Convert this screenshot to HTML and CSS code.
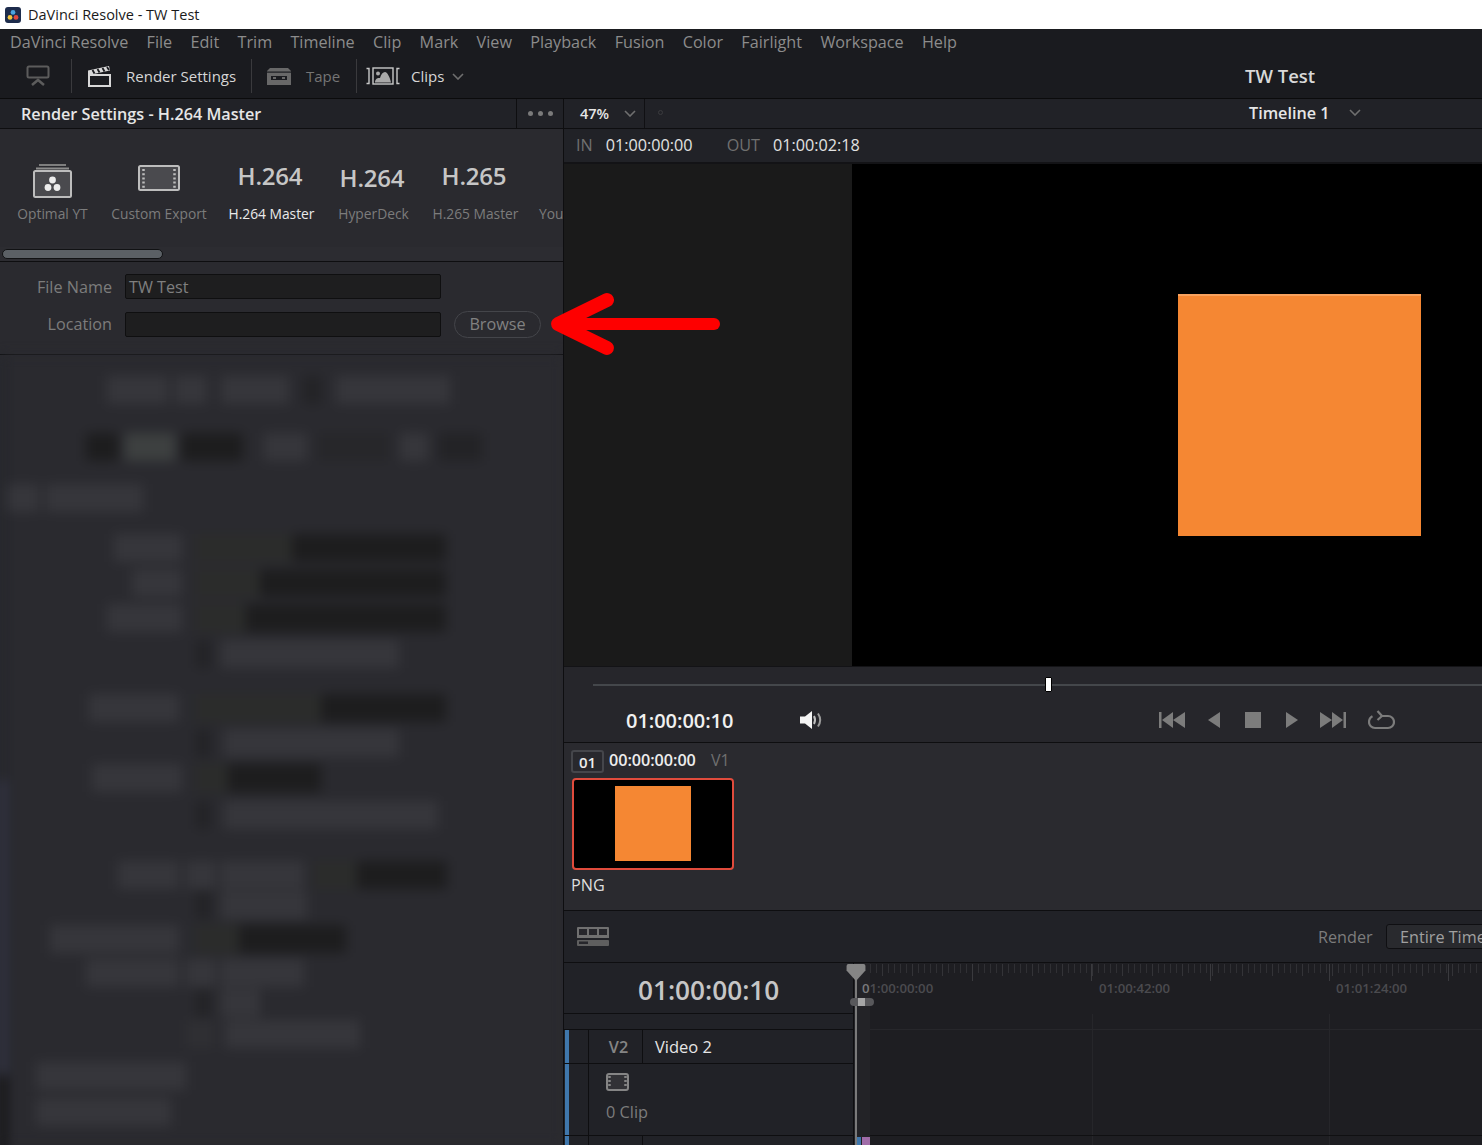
FILE: index.html
```html
<!DOCTYPE html>
<html lang="en">
<head>
<meta charset="utf-8">
<title>DaVinci Resolve - TW Test</title>
<link rel="stylesheet" href="styles.css">
</head>
<body>
<div class="app">
  <header class="titlebar">
    <svg class="app-icon" viewBox="0 0 16 16"><rect width="16" height="16" rx="3" fill="#1d2c4c"/><circle cx="8" cy="5.4" r="2.4" fill="#4aa3e0"/><circle cx="5" cy="10.4" r="2.4" fill="#f2c53d"/><circle cx="11" cy="10.4" r="2.4" fill="#e2483d"/></svg>
    <span>DaVinci Resolve - TW Test</span>
  </header>
  <nav class="menubar">
    <span>DaVinci Resolve</span><span>File</span><span>Edit</span><span>Trim</span><span>Timeline</span><span>Clip</span><span>Mark</span><span>View</span><span>Playback</span><span>Fusion</span><span>Color</span><span>Fairlight</span><span>Workspace</span><span>Help</span>
  </nav>
  <div class="toolbar">
    <svg class="tb-monitor" viewBox="0 0 24 22" fill="none" stroke="#5c5c5c" stroke-width="2"><rect x="1.500" y="1.500" width="21" height="11" rx="1.500"/><path d="M6 20l6-5 6 5" stroke-width="2.500"/></svg>
    <i class="tb-sep sep-a"></i>
    <svg class="tb-clapper" viewBox="0 0 23 21"><path d="M1 9h21v11H1z" fill="#1b1c20" stroke="#d8d8d8" stroke-width="2"/><path d="M0 9V4.500L21 0l1 4.500L3 8.500z" fill="#d8d8d8"/><path d="M4.500 4l2 3.500M9.500 3l2 3.500M14.500 2l2 3.500M19 1l2 3" stroke="#1b1c20" stroke-width="1.800"/></svg>
    <span class="tb-label tb-render">Render Settings</span>
    <i class="tb-sep sep-b"></i>
    <svg class="tb-tape" viewBox="0 0 24 17"><path d="M3 0h18l3 3v14H0V3z" fill="#686868"/><rect x="0" y="3.500" width="24" height="1.200" fill="#1b1c20"/><rect x="4" y="8" width="16" height="4" fill="#1b1c20"/><rect x="6" y="9" width="3" height="2" fill="#686868"/><rect x="15" y="9" width="3" height="2" fill="#686868"/></svg>
    <span class="tb-label tb-dim">Tape</span>
    <i class="tb-sep sep-c"></i>
    <svg class="tb-clips" viewBox="0 0 34 18" fill="none"><path d="M.5 1.500h2.500v15H.5M33.500 1.500H31v15h2.500" stroke="#c8c8c8" stroke-width="1.400"/><rect x="7" y="1" width="20" height="16" stroke="#c8c8c8" stroke-width="1.400"/><circle cx="12" cy="6.500" r="2" fill="#a8a8a8"/><path d="M9 15.500c0-4 3-5 5-4.500 1-4 3-6 5-6s5 5 6 10.500z" fill="#a8a8a8"/></svg>
    <span class="tb-label tb-clipstxt">Clips</span>
    <svg class="chev tb-chev" viewBox="0 0 12 7"><path d="M1 1l5 5 5-5"/></svg>
    <strong class="project">TW Test</strong>
  </div>

  <main class="workspace">
    <section class="left">
      <div class="panel-head">
        <h1>Render Settings - H.264 Master</h1>
        <div class="dots"><i></i><i></i><i></i></div>
      </div>
      <div class="presets">
        <div class="preset-row">
          <div class="preset p1">
            <div class="glyph"><svg class="ico-opt" viewBox="0 0 40 34"><rect x="6" y="0" width="27" height="2" fill="#7e7e7e"/><rect x="3" y="3.500" width="33" height="2" fill="#8c8c8c"/><rect x="1" y="7" width="37" height="26" rx="1.500" fill="#4a4a4e" stroke="#bdbdbd" stroke-width="2"/><circle cx="19.500" cy="16" r="3.400" fill="#ececec"/><circle cx="15" cy="23.500" r="3.400" fill="#ececec"/><circle cx="24" cy="23.500" r="3.400" fill="#ececec"/></svg></div>
            <span>Optimal YT</span>
          </div>
          <div class="preset p2">
            <div class="glyph"><svg class="ico-film" viewBox="0 0 42 26"><rect x="1" y="1" width="40" height="24" rx="1.500" fill="#4a4a4e" stroke="#bdbdbd" stroke-width="2"/><path d="M5.500 4v19M36.500 4v19" stroke="#bdbdbd" stroke-width="2.500" stroke-dasharray="2 2.200"/></svg></div>
            <span>Custom Export</span>
          </div>
          <div class="preset p3 active">
            <div class="glyph big">H.264</div>
            <span>H.264 Master</span>
          </div>
          <div class="preset p4">
            <div class="glyph big low">H.264</div>
            <span>HyperDeck</span>
          </div>
          <div class="preset p5">
            <div class="glyph big">H.265</div>
            <span>H.265 Master</span>
          </div>
          <div class="preset p6">
            <div class="glyph"></div>
            <span>YouTube</span>
          </div>
        </div>
        <div class="scrolltrack"><div class="scrollthumb"></div></div>
      </div>
      <div class="file-form">
        <div class="form-row">
          <label>File Name</label>
          <div class="field">TW Test</div>
        </div>
        <div class="form-row">
          <label>Location</label>
          <div class="field"></div>
          <div class="browse">Browse</div>
        </div>
      </div>
      <div class="blurred">
        <i class="edge-tint"></i><i class="edge-black"></i>
        <div class="br r1"><b class="blob x107 w61"></b><b class="blob x7 w32"></b><b class="blob x14 w68"></b><b class="blob dark x15 w17"></b><b class="blob x15 w114"></b></div>
        <div class="br r2"><b class="blob vdark x86 w32"></b><b class="blob grey x7 w50"></b><b class="blob vdark x7 w61"></b><b class="blob x21 w43"></b><b class="blob dark faint x11 w71"></b><b class="blob x11 w28"></b><b class="blob dark x11 w43"></b></div>
        <div class="br r3"><b class="blob x7 w32"></b><b class="blob x7 w97"></b></div>

        <div class="br r4"><div class="lab"><b class="blob w68"></b></div><div class="val"><b class="blob soft w96"></b><b class="blob vdark w154"></b></div></div>
        <div class="br r5"><div class="lab"><b class="blob w50"></b></div><div class="val"><b class="blob soft w64"></b><b class="blob vdark w186"></b></div></div>
        <div class="br r6"><div class="lab"><b class="blob w75"></b></div><div class="val"><b class="blob soft w50"></b><b class="blob vdark w200"></b></div></div>
        <div class="br r7"><div class="lab"></div><div class="val"><b class="blob dark w14"></b><b class="blob x11 w178"></b></div></div>

        <div class="br r8"><div class="lab short"><b class="blob w90"></b></div><div class="val"><b class="blob soft w125"></b><b class="blob vdark w125"></b></div></div>
        <div class="br r9"><div class="lab"></div><div class="val"><b class="blob dark w14"></b><b class="blob x14 w175"></b></div></div>
        <div class="br r10"><div class="lab"><b class="blob w90"></b></div><div class="val"><b class="blob soft w32"></b><b class="blob vdark w93"></b></div></div>
        <div class="br r11"><div class="lab"></div><div class="val"><b class="blob dark w14"></b><b class="blob x14 w214"></b></div></div>

        <div class="br r12"><div class="lab short"><b class="blob w61"></b></div><div class="val wide"><b class="blob w30"></b><b class="blob x5 w83"></b><b class="blob soft x10 w43"></b><b class="blob vdark w90"></b></div></div>
        <div class="br r13"><div class="lab"></div><div class="val"><b class="blob dark w14"></b><b class="blob x11 w86"></b></div></div>
        <div class="br r14"><div class="lab short"><b class="blob w129"></b></div><div class="val"><b class="blob soft w43"></b><b class="blob vdark w107"></b></div></div>
        <div class="br r15"><div class="lab short"><b class="blob w93"></b></div><div class="val wide"><b class="blob w30"></b><b class="blob x5 w83"></b></div></div>
        <div class="br r16"><div class="lab"></div><div class="val"><b class="blob dark w14"></b><b class="blob x11 w39"></b></div></div>
        <div class="br r17"><div class="lab"></div><div class="val wide"><b class="blob edge w28"></b><b class="blob x11 w135"></b></div></div>

        <div class="br r18"><b class="blob x36 w150"></b></div>
        <div class="br r19"><b class="blob x36 w135"></b></div>
      </div>
    </section>

    <section class="right">
      <div class="viewer-head">
        <div class="zoom"><span>47%</span><svg class="chev" viewBox="0 0 12 7"><path d="M1 1l5 5 5-5"/></svg></div>
        <i class="tiny-dot"></i>
        <div class="tl-name"><span>Timeline 1</span><svg class="chev" viewBox="0 0 12 7"><path d="M1 1l5 5 5-5"/></svg></div>
      </div>
      <div class="inout">
        <span class="io-key">IN</span><span class="io-val">01:00:00:00</span>
        <span class="io-key io-out">OUT</span><span class="io-val">01:00:02:18</span>
      </div>
      <div class="viewer">
        <div class="viewer-side"></div>
        <div class="viewer-frame"><div class="orange-square"></div></div>
      </div>
      <div class="transport">
        <div class="scrub"><i class="scrub-handle"></i></div>
        <div class="transport-row">
          <span class="tc">01:00:00:10</span>
          <svg class="speaker" viewBox="0 0 22 18"><path d="M0 5.500h5L12 0v18l-7-5.500H0z" fill="#f4f4f4"/><path d="M14 5c1.300 2.500 1.300 5.500 0 8" fill="none" stroke="#bdbdbd" stroke-width="2"/><path d="M18 2.500c2.700 4 2.700 9 0 13" fill="none" stroke="#9a9a9a" stroke-width="2"/></svg>
          <div class="controls">
            <svg class="c-skip" viewBox="0 0 26 16"><path d="M0 0h2.500v16H0zM3 8l11-8v16zM14 8l12-8v16z"/></svg>
            <svg class="c-step" viewBox="0 0 12 16"><path d="M12 0v16L0 8z"/></svg>
            <svg class="c-stop" viewBox="0 0 16 16"><rect width="16" height="16"/></svg>
            <svg class="c-step" viewBox="0 0 12 16"><path d="M0 0v16l12-8z"/></svg>
            <svg class="c-skip" viewBox="0 0 26 16"><path d="M26 0h-2.500v16H26zM23 8L12 0v16zM12 8L0 0v16z"/></svg>
            <svg class="c-loop" viewBox="0 0 27 20" fill="none" stroke="#7c7c7c" stroke-width="2.200"><path d="M13 6h7a6 6 0 0 1 0 12H7a6 6 0 0 1-6-6c0-2.500 1.200-4.500 3.500-5.700"/><path d="M9.500 1l4.500 5-4.500 4"/></svg>
          </div>
        </div>
      </div>
      <div class="clips">
        <div class="clip-info"><span class="clip-num">01</span><span class="clip-tc">00:00:00:00</span><span class="clip-track">V1</span></div>
        <div class="thumb"><div class="thumb-img"></div></div>
        <div class="clip-codec">PNG</div>
      </div>
      <div class="render-bar">
        <svg class="rb-icon" viewBox="0 0 32 19"><path d="M1 0h30a1 1 0 0 1 1 1v10H0V1a1 1 0 0 1 1-1z" fill="#707070"/><path d="M2 2h8v6H2zM12 2h8v6h-8zM22 2h8v6h-8z" fill="#26262b"/><rect y="13" width="32" height="6" rx="1" fill="#5f5f5f"/><rect x="2" y="14.500" width="9" height="2.500" fill="#26262b"/></svg>
        <span class="rb-label">Render</span>
        <div class="rb-select">Entire Timeline</div>
      </div>
      <div class="timeline">
        <div class="track-heads">
          <div class="big-tc">01:00:00:10</div>
          <div class="th-blank"></div>
          <div class="th-row">
            <i class="strip"></i><i class="cell-a"></i><span class="t-id">V2</span><span class="t-name">Video 2</span>
          </div>
          <div class="th-body">
            <i class="strip"></i><i class="cell-a"></i>
            <div class="t-info">
              <svg class="t-film" viewBox="0 0 23 18"><rect x="1" y="1" width="21" height="16" rx="2" fill="#323236" stroke="#858585" stroke-width="2"/><path d="M3.500 3v12M19.500 3v12" stroke="#858585" stroke-width="2.500" stroke-dasharray="2 2"/></svg>
              <span>0 Clip</span>
            </div>
          </div>
          <div class="th-row">
            <i class="strip"></i><i class="cell-a"></i><span class="t-id"></span><span class="t-name"></span>
          </div>
        </div>
        <div class="track-area">
          <div class="ruler">
            <div class="ticks"></div>
            <div class="labels"><span><em>0</em>1:00:00:00</span><span>01:00:42:00</span><span>01:01:24:00</span></div>
          </div>
          <div class="lanes">
            <div class="lane-grid">
              <div class="lane lane-top"></div>
              <div class="lane lane-v2"></div>
            </div>
          </div>
          <i class="gutter"></i>
          <i class="mini-blue"></i><i class="mini-purple"></i>
          <i class="ph-line"></i>
          <svg class="ph-head" viewBox="0 0 20 18"><path d="M2 0h16a2 2 0 0 1 2 2v5l-10 11L0 7V2a2 2 0 0 1 2-2z" fill="#858585"/></svg>
          <div class="ph-handle"><i></i></div>
        </div>
      </div>
    </section>
  </main>
  <svg class="red-arrow" viewBox="0 0 180 70" fill="none" stroke="#fe0000" stroke-linecap="round" stroke-linejoin="round"><path d="M10 35H166" stroke-width="12"/><path d="M59 11L10 35l49 24" stroke-width="14"/></svg>
</div>
</body>
</html>
```
FILE: styles.css
```css
* { box-sizing: border-box; }
html, body { margin: 0; padding: 0; }
body { width: 1482px; height: 1145px; overflow: hidden; font-family: "Open Sans", "Liberation Sans", sans-serif; background: #1a1b1e; }
i, b { display: block; font-style: normal; font-weight: normal; }
em { font-style: normal; color: #77777a; }
.app { position: relative; width: 1482px; height: 1145px; overflow: hidden; display: flex; flex-direction: column; }

.titlebar { height: 29px; flex: none; background: #fff; display: flex; align-items: center; padding-left: 5px; color: #1a1a1a; font-size: 14.500px; }
.app-icon { width: 16px; height: 16px; margin-right: 7px; }

.menubar { height: 26px; flex: none; background: #1a1b1f; display: flex; align-items: center; padding-left: 10px; gap: 18.300px; color: #8c8c8c; font-size: 16.200px; }

.toolbar { height: 44px; flex: none; background: #1a1b1f; border-bottom: 1px solid #0b0b0c; display: flex; align-items: center; position: relative; padding-bottom: 1px; }
.tb-monitor { width: 24px; height: 22px; margin-left: 26px; flex: none; }
.tb-sep { width: 1px; height: 34px; background: #3a3a3d; flex: none; }
.sep-a { margin-left: 21px; }
.tb-clapper { width: 23px; height: 21px; margin-left: 16px; flex: none; }
.tb-label { font-size: 15px; color: #d6d6d6; }
.tb-render { margin-left: 15px; width: 111px; white-space: nowrap; }
.sep-b { margin-left: 14px; }
.tb-tape { width: 24px; height: 17px; margin-left: 15px; flex: none; }
.tb-dim { color: #757575; margin-left: 15px; width: 35px; }
.sep-c { margin-left: 15px; }
.tb-clips { width: 34px; height: 18px; margin-left: 9px; flex: none; }
.tb-clipstxt { margin-left: 11px; width: 34px; }
.chev { width: 12px; height: 7px; fill: none; stroke: #6f6f6f; stroke-width: 1.600; flex: none; }
.tb-chev { margin-left: 7px; }
.project { position: absolute; left: 1245px; top: 9px; font-size: 18.500px; font-weight: 600; color: #d9d9d9; line-height: 24px; }

.workspace { flex: 1; min-height: 0; display: grid; grid-template-columns: 563px 1fr; column-gap: 1px; background: #0e0e10; }

.left { background: #2a2a2f; display: flex; flex-direction: column; min-height: 0; overflow: hidden; }
.panel-head { height: 30px; flex: none; background: #212227; border-bottom: 1px solid #0e0e10; display: flex; align-items: center; justify-content: space-between; }
.panel-head h1 { margin: 0 0 0 21px; font-size: 16.200px; font-weight: 600; color: #e6e6e6; white-space: nowrap; }
.dots { width: 47px; height: 100%; border-left: 1px solid #0e0e10; display: flex; align-items: center; justify-content: center; gap: 5px; }
.dots i { width: 5px; height: 5px; border-radius: 50%; background: #7a7a7a; }

.presets { height: 133px; flex: none; border-bottom: 1px solid #0e0e10; display: flex; flex-direction: column; justify-content: space-between; overflow: hidden; }
.preset-row { display: flex; height: 118px; }
.preset { flex: none; display: flex; flex-direction: column; align-items: center; color: #7c7c7c; font-size: 13.800px; white-space: nowrap; padding-top: 32px; }
.p1 { width: 105px; }
.p2 { width: 108px; }
.p3 { width: 117px; }
.p4 { width: 87px; }
.p5 { width: 117px; }
.p6 { width: 50px; align-items: flex-start; padding-left: 5px; }
.preset.active { color: #eaeaea; }
.glyph { height: 40px; margin-bottom: 3px; display: flex; align-items: center; justify-content: center; }
.big { font-size: 24px; font-weight: 600; letter-spacing: -.2px; color: #c6c6c6; line-height: 32px; padding: 0 3px 10px 0; }
.low { padding-top: 4px; }
.ico-opt { width: 40px; height: 34px; }
.ico-film { width: 42px; height: 26px; margin-top: -6px; }
.scrolltrack { height: 14px; background: #2c2c31; padding: 2px 0 3px 2px; }
.scrollthumb { width: 161px; height: 10px; border-radius: 5px; background: #5b6065; border: 1px solid #111214; }

.file-form { height: 93px; flex: none; border-bottom: 1px solid #0e0e10; padding-top: 12px; display: flex; flex-direction: column; gap: 13px; }
.form-row { height: 25px; display: flex; align-items: center; }
.form-row label { width: 112px; text-align: right; color: #7c7c7c; font-size: 16.200px; flex: none; }
.form-row + .form-row label { padding-bottom: 2px; }
.field { width: 316px; height: 25px; margin-left: 13px; background: #1e1e1f; border: 1px solid #0f0f10; border-radius: 2px; color: #7f7f7f; font-size: 16.200px; line-height: 24px; padding-left: 3px; flex: none; }
.browse { width: 87px; height: 27px; margin-left: 13px; border: 1px solid #44454a; border-radius: 14px; color: #818181; font-size: 16.200px; line-height: 25px; text-align: center; flex: none; }

.blurred { flex: 1; position: relative; filter: blur(6px); padding-top: 21px; background: linear-gradient(90deg, #24262b 0, #2a2a2f 12px, #2a2a2f 100%); }
.edge-tint { position: absolute; left: 0; top: 425px; width: 6px; height: 295px; background: #34364a; }
.edge-black { position: absolute; left: 0; top: 720px; width: 6px; height: 90px; background: #0e0e0e; }
.br { height: 28px; display: flex; align-items: stretch; }
.r2 { margin-top: 29px; }
.r3 { margin-top: 23px; }
.r4 { margin-top: 22px; }
.r5, .r6, .r9, .r10 { margin-top: 7px; }
.r7 { margin-top: 8px; }
.r8 { margin-top: 26px; }
.r11 { margin-top: 9px; }
.r12 { margin-top: 32px; }
.r13 { margin-top: 2px; }
.r14, .r15 { margin-top: 6px; }
.r16 { margin-top: 2px; }
.r17 { margin-top: 3px; }
.r18 { margin-top: 14px; }
.r19 { margin-top: 8px; }
.lab { width: 182px; flex: none; display: flex; justify-content: flex-end; }
.lab.short { padding-right: 3px; }
.val { margin-left: 14px; width: 250px; flex: none; display: flex; }
.val.wide { margin-left: 4px; width: 260px; }

.blob { height: 100%; background: #36363b; flex: none; }
.dark { background: #232326; }
.vdark { background: #1d1d1e; }
.grey { background: #3d4040; }
.soft { background: #2b2c2b; }
.faint { opacity: .5; }
.edge { background: #2f2f33; }
.x5 { margin-left: 5px; } .x7 { margin-left: 7px; } .x10 { margin-left: 10px; } .x11 { margin-left: 11px; } .x14 { margin-left: 14px; } .x15 { margin-left: 15px; } .x21 { margin-left: 21px; } .x36 { margin-left: 36px; } .x86 { margin-left: 86px; } .x107 { margin-left: 107px; }
.w14 { width: 14px; } .w17 { width: 17px; } .w28 { width: 28px; } .w30 { width: 30px; } .w32 { width: 32px; } .w39 { width: 39px; } .w43 { width: 43px; } .w50 { width: 50px; } .w61 { width: 61px; } .w64 { width: 64px; } .w68 { width: 68px; } .w71 { width: 71px; } .w75 { width: 75px; } .w83 { width: 83px; } .w86 { width: 86px; } .w90 { width: 90px; } .w93 { width: 93px; } .w96 { width: 96px; } .w97 { width: 97px; } .w107 { width: 107px; } .w114 { width: 114px; } .w125 { width: 125px; } .w129 { width: 129px; } .w135 { width: 135px; } .w150 { width: 150px; } .w154 { width: 154px; } .w175 { width: 175px; } .w178 { width: 178px; } .w186 { width: 186px; } .w200 { width: 200px; } .w214 { width: 214px; }

.right { display: flex; flex-direction: column; min-width: 0; min-height: 0; overflow: hidden; }
.viewer-head { height: 30px; flex: none; background: #212227; border-bottom: 1px solid #0e0e10; display: flex; align-items: center; position: relative; }
.zoom { width: 81px; height: 100%; border-right: 1px solid #101013; display: flex; align-items: center; padding-left: 16px; gap: 15px; color: #e6e6e6; font-size: 14.500px; font-weight: 600; }
.tiny-dot { width: 5px; height: 5px; border: 1px solid #3b3b3e; border-radius: 50%; margin-left: 13px; margin-top: -2px; }
.tl-name { margin-left: 586px; display: flex; align-items: center; gap: 20px; color: #e6e6e6; font-size: 16.200px; font-weight: 600; white-space: nowrap; padding-bottom: 2px; }
.tl-name span { width: 80px; }
.inout { height: 33px; flex: none; background: #212227; display: flex; align-items: center; padding: 0 0 2px 12px; font-size: 16.200px; }
.io-key { color: #707070; }
.io-val { color: #e2e2e2; margin-left: 13px; width: 87px; white-space: nowrap; }
.io-out { margin-left: 34px; }
.viewer { height: 504px; flex: none; display: flex; border-top: 2px solid #131316; }
.viewer-side { width: 288px; background: #1a1a1a; flex: none; }
.viewer-frame { flex: 1; background: #000; padding: 130px 0 0 326px; }
.orange-square { width: 243px; height: 242px; background: #f58733; border-top: 2px solid #f9a25e; }
.transport { height: 77px; flex: none; background: #26262b; border-top: 1px solid #131316; border-bottom: 1px solid #0e0e10; }
.scrub { height: 2px; margin: 17px 0 0 29px; background: #44474b; position: relative; }
.scrub-handle { position: absolute; left: 452px; top: -7px; width: 7px; height: 15px; background: #fff; border: 1px solid #000; border-radius: 1px; }
.transport-row { display: flex; align-items: center; height: 38px; margin-top: 15px; padding-left: 62px; }
.tc { font-size: 20px; font-weight: 600; color: #f0f0f0; width: 108px; white-space: nowrap; letter-spacing: -.05px; flex: none; }
.speaker { width: 22px; height: 18px; margin-left: 66px; flex: none; filter: blur(.4px); }
.controls { display: flex; align-items: center; margin-left: 337px; fill: #7c7c7c; filter: blur(.4px); }
.controls svg { flex: none; display: block; }
.c-skip { width: 26px; height: 16px; }
.c-step { width: 12px; height: 16px; margin: 0 24px; }
.c-stop { width: 16px; height: 16px; margin: 0 1px; }
.c-skip:nth-child(5) { margin-left: -2px; }
.c-step:nth-child(2) { margin-left: 23px; }
.c-loop { width: 27px; height: 20px; margin-left: 22px; }
.clips { height: 168px; flex: none; background: #2a2a2f; border-bottom: 1px solid #0e0e10; padding: 7px 0 0 7px; }
.clip-info { display: flex; align-items: center; height: 22px; }
.clip-num { width: 33px; height: 23px; border: 2px solid #45464b; border-radius: 3px; background: #28282d; color: #ededed; font-size: 15px; font-weight: 600; line-height: 20px; text-align: center; margin-top: 1px; }
.clip-tc { margin-left: 5px; color: #ededed; font-size: 16.200px; font-weight: 600; letter-spacing: -.05px; width: 88px; white-space: nowrap; margin-top: -2px; }
.clip-track { margin-left: 14px; color: #6f6f6f; font-size: 16px; margin-top: -2px; }
.thumb { width: 162px; height: 92px; margin: 6px 0 0 1px; background: #000; border: 2px solid #e04b3c; border-radius: 4px; padding: 6px 0 0 41px; }
.thumb-img { width: 76px; height: 75px; background: #f58733; }
.clip-codec { color: #dedede; font-size: 16.200px; margin-top: 4px; line-height: 22px; }
.render-bar { height: 52px; flex: none; background: #212227; border-bottom: 1px solid #0e0e10; display: flex; align-items: center; white-space: nowrap; overflow: hidden; }
.rb-icon { width: 32px; height: 19px; margin-left: 13px; flex: none; }
.rb-label { margin-left: 709px; color: #7c7c7c; font-size: 16.200px; width: 55px; flex: none; }
.rb-select { margin-left: 13px; width: 200px; flex: none; height: 25px; background: #292a2e; border: 1px solid #0f0f12; border-radius: 3px; color: #a0a0a0; font-size: 16.200px; line-height: 24px; padding-left: 13px; }
.timeline { flex: 1; min-height: 0; display: flex; background: #212227; }
.track-heads { width: 289px; flex: none; display: flex; flex-direction: column; }
.big-tc { height: 51px; flex: none; border-bottom: 1px solid #0e0e10; padding-left: 74px; font-size: 26.200px; font-weight: 600; color: #c6c6c6; line-height: 54px; }
.th-blank { height: 16px; flex: none; border-bottom: 1px solid #0e0e10; }
.th-row { height: 34px; flex: none; display: flex; border-bottom: 1px solid #0e0e10; }
.th-body { height: 72px; flex: none; display: flex; border-bottom: 1px solid #0e0e10; }
.strip { width: 4px; margin-left: 1px; background: #3f77ac; flex: none; }
.cell-a { width: 20px; flex: none; border-right: 1px solid #0e0e10; }
.t-id { width: 54px; flex: none; padding-left: 6px; text-align: center; border-right: 1px solid #0e0e10; color: #858585; font-size: 16.200px; font-weight: 600; line-height: 34px; }
.t-name { padding-left: 12px; color: #e6e6e6; font-size: 16.500px; line-height: 34px; }
.t-info { padding: 9px 0 0 17px; display: flex; flex-direction: column; gap: 10px; color: #7c7c7c; font-size: 16.300px; }
.t-film { width: 23px; height: 18px; }
.track-area { flex: 1; min-width: 0; position: relative; background: #1e1e22; border-left: 1px solid #0e0e10; display: flex; flex-direction: column; }
.ruler { height: 51px; flex: none; position: relative; }
.ticks {
  height: 20px; margin-left: 16px;
  background-image: linear-gradient(90deg, #3a3a3e 1px, transparent 1px), linear-gradient(90deg, #343438 1px, transparent 1px), linear-gradient(90deg, #303034 1px, transparent 1px);
  background-size: 119px 17px, 30px 12px, 6px 9px;
  background-position: 102px 1px, 12px 1px, 0 1px;
  background-repeat: repeat-x;
}
.labels { position: absolute; left: 8px; top: 16px; display: flex; color: #4b4b4f; font-size: 13.200px; font-weight: 600; line-height: 18px; }
.labels span { width: 237px; white-space: nowrap; }
.lanes { flex: 1; display: flex; padding-left: 16px; }
.gutter { position: absolute; left: 0; top: 0; bottom: 0; width: 16px; background: rgba(255, 255, 255, .025); }
.lane-grid { flex: 1; background-image: linear-gradient(#26262a, #26262a), linear-gradient(#26262a, #26262a); background-size: 1px 100%, 1px 100%; background-position: 222px 0, 459px 0; background-repeat: no-repeat; }
.lane { border-bottom: 1px solid #27272b; }
.lane-top { height: 16px; }
.lane-v2 { height: 106px; border-bottom-color: #101012; }
.ph-line { position: absolute; left: 1px; top: 14px; bottom: 0; width: 2px; background: #7a7a7a; }
.ph-head { position: absolute; left: -8px; top: 1px; width: 20px; height: 17px; }
.ph-handle { position: absolute; left: -4px; top: 35px; width: 24px; height: 8px; border-radius: 4px; background: #58585b; }
.ph-handle i { width: 7px; height: 8px; margin-left: 8px; background: #a6a6a6; }
.mini-blue { position: absolute; left: 2px; top: 174px; width: 5px; height: 9px; background: #3f77ac; }
.mini-purple { position: absolute; left: 8px; top: 174px; width: 8px; height: 9px; background: #a06ca8; }

.red-arrow { position: absolute; left: 548px; top: 289px; width: 180px; height: 70px; }
```
